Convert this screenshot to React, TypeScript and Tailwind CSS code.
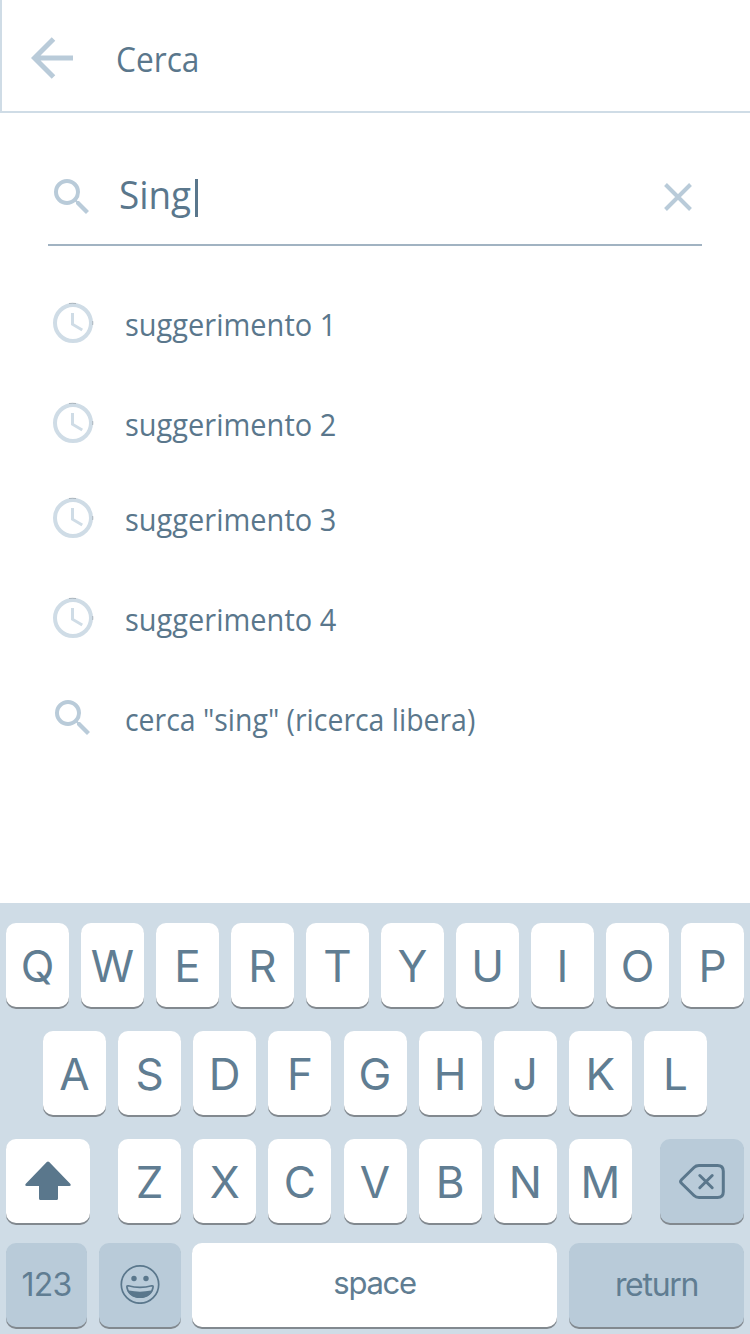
import type { ReactNode } from 'react';

function SearchIcon() {
  return (
    <svg viewBox="0 0 24 24" className="size-12 shrink-0 fill-[#b9cbd9]">
      <path d="M15.5 14h-.79l-.28-.27A6.471 6.471 0 0 0 16 9.5 6.5 6.5 0 1 0 9.5 16c1.61 0 3.09-.59 4.23-1.57l.27.28v.79l5 4.99L20.49 19l-4.99-5zm-6 0C7.01 14 5 11.99 5 9.5S7.01 5 9.5 5 14 7.01 14 9.5 11.99 14 9.5 14z" />
    </svg>
  );
}

function ClockIcon() {
  return (
    <svg viewBox="0 0 48 48" className="size-12 shrink-0" fill="none">
      <circle cx="24" cy="24" r="18" stroke="#cfdce6" strokeWidth="4" />
      <path d="M20 4.500Q23.500 4 27 4.500M43.700 22Q44 24 43.700 26" stroke="#8b969e" strokeWidth=".6" />
      <path d="M22 14v12l10.500 6.300 1.500-2.460-9-5.340V14z" fill="#cfdce6" />
    </svg>
  );
}

function Key({ children, className = 'w-[63px] bg-white pt-[2px] text-[44px]' }: { children: ReactNode; className?: string }) {
  return (
    <div className={`flex h-[84px] shrink-0 items-center justify-center rounded-[10px] leading-none shadow-[0_2px_0_#82898f] ${className}`}>
      {children}
    </div>
  );
}

const rows = [
  { icon: 'clock', label: 'suggerimento 1', height: 'h-[100px]', fit: 'scale-x-[0.935]' },
  { icon: 'clock', label: 'suggerimento 2', height: 'h-[95px]', fit: 'scale-x-[0.935]' },
  { icon: 'clock', label: 'suggerimento 3', height: 'h-[100px]', fit: 'scale-x-[0.935]' },
  { icon: 'clock', label: 'suggerimento 4', height: 'h-[100px]', fit: 'scale-x-[0.935]' },
  { icon: 'search', label: 'cerca "sing" (ricerca libera)', height: 'h-[48px]', fit: 'scale-x-[0.917]' },
];

export default function App() {
  return (
    <div className="flex h-[1334px] w-[750px] flex-col overflow-hidden bg-white font-['Open_Sans',sans-serif] text-[#5a778c]">
      <header className="flex h-[113px] shrink-0 items-center border-b-2 border-l-2 border-[#cfdce6] pb-[1px] pl-[29px] pt-[6px]">
        <svg viewBox="0 0 42 42" className="size-[42px] shrink-0" fill="none" stroke="#b9cbd9" strokeWidth="5">
          <path d="M42 21H3.500M22.500 2l-19 19 19 19" />
        </svg>
        <h1 className="ml-[43px] origin-left scale-x-[0.905] pt-px text-[35px] leading-[48px]">Cerca</h1>
      </header>

      <div className="mx-12 flex h-[133px] shrink-0 items-start border-b-2 border-[#a1b3c2] pt-[60px]">
        <SearchIcon />
        <div className="ml-[23px] mt-[-3px] flex h-[48px] flex-1 items-center text-[39px] leading-[48px]">
          <span className="w-[75px] origin-left scale-x-[0.945]">Sing</span>
          <span className="ml-px mt-[7px] h-[38px] w-[2.5px] bg-[#5a778c]" />
        </div>
        <svg viewBox="0 0 28 28" className="mr-[10px] mt-[10px] size-7" fill="none" stroke="#b9cbd9" strokeWidth="4">
          <path d="m1.500 1.500 25 25m0-25-25 25" />
        </svg>
      </div>

      <main className="flex h-[657px] shrink-0 flex-col pl-[49px] pt-[53px]">
        {rows.map((row) => (
          <div key={row.label} className={`flex shrink-0 items-start ${row.height}`}>
            {row.icon === 'clock' ? <ClockIcon /> : <SearchIcon />}
            <span className={`ml-[28px] mt-[1px] origin-left whitespace-nowrap text-[31px] leading-[48px] ${row.fit}`}>{row.label}</span>
          </div>
        ))}
      </main>

      <div className="flex h-[431px] shrink-0 flex-col bg-[#cfdce6] pt-5 font-['Inter',sans-serif] text-[#607d92]">
        <div className="flex h-[108px] shrink-0 gap-3 px-1.5">
          {[...'QWERTYUIOP'].map((c) => <Key key={c}>{c}</Key>)}
        </div>
        <div className="flex h-[108px] shrink-0 gap-[12.125px] pl-[43px]">
          {[...'ASDFGHJKL'].map((c) => <Key key={c}>{c}</Key>)}
        </div>
        <div className="flex h-[104px] shrink-0 justify-between px-1.5">
          <Key className="w-[84px] bg-white">
            <svg viewBox="0 0 46 40" className="h-10 w-[46px]" fill="#5a778c">
              <path d="M21.800 1q1.200-1 2.400 0l21 21.700q1.500 2.100-1 2.300H33v12.500q0 1.500-1.500 1.500h-16q-1.500 0-1.500-1.500V25H1.800q-2.500-.2-1-2.300z" />
            </svg>
          </Key>
          <div className="flex gap-[12.125px]">
            {[...'ZXCVBNM'].map((c) => <Key key={c}>{c}</Key>)}
          </div>
          <Key className="w-[84px] bg-[#b9cbd9]">
            <svg viewBox="0 0 46 35" className="h-[35px] w-[46px]" fill="none" stroke="#5a778c" strokeWidth="3" strokeLinecap="round" strokeLinejoin="round">
              <path d="M20 1.500h18.500q5.800 0 5.800 5.800v20.400q0 5.800-5.800 5.800H20q-3 0-5-2L2.500 19.300q-1.800-1.800 0-3.600L15 3.500q2-2 5-2z" />
              <path d="m20.800 11.500 12.400 12.200m0-12.200L20.800 23.700" />
            </svg>
          </Key>
        </div>
        <div className="flex shrink-0 px-1.5">
          <Key className="w-[81px] bg-[#b9cbd9] text-[32px] tracking-[-0.8px]">123</Key>
          <Key className="ml-3 w-[82px] bg-[#b9cbd9] pb-[2px] pr-px">
            <svg viewBox="0 0 40 40" className="size-10" fill="none" stroke="#5a778c" strokeWidth="1.700">
              <circle cx="20" cy="20.500" r="18.700" />
              <circle cx="14" cy="14.500" r="2.700" fill="#5a778c" stroke="none" />
              <circle cx="26" cy="14.500" r="2.700" fill="#5a778c" stroke="none" />
              <path d="M8.300 21.800q11.700 3.200 23.400 0q1.500-.2 1.400 1.200c-.6 5.800-5.700 10.200-13.100 10.200S7.500 28.800 6.900 23q-.1-1.400 1.400-1.200z" />
              <path d="M8.700 27.400q11.300 2.200 22.600 0-3.400 5.800-11.300 5.800t-11.300-5.800z" fill="#5a778c" />
            </svg>
          </Key>
          <Key className="ml-[11px] w-[365px] bg-white pb-[5px] text-[31px] tracking-[-1.3px]">space</Key>
          <Key className="ml-3 w-[175px] bg-[#b9cbd9] text-[32px] tracking-[-1.3px]">return</Key>
        </div>
      </div>
    </div>
  );
}
